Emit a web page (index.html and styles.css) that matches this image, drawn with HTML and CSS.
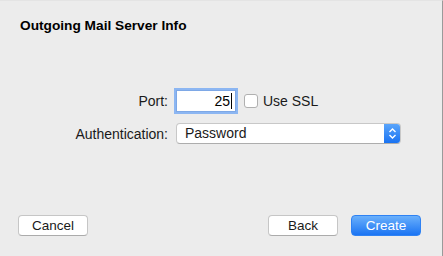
FILE: index.html
```html
<!DOCTYPE html>
<html>
	<head>
		<meta charset="utf-8">
		<meta name="viewport" content="width=device-width,initial-scale=1.0" />
		<title>Outgoing Mail Server Info</title>
		<link rel="stylesheet" href="styles.css">
	</head>
	<body>
		<div class="sheet">
			<h1 class="title">Outgoing Mail Server Info</h1>
			<div class="form">
				<label class="label">Port:</label>
				<div class="row">
					<div class="field focus">25<span class="caret"></span></div>
					<span class="check"></span>
					<span class="checkText">Use SSL</span>
				</div>
				<label class="label">Authentication:</label>
				<div class="row">
					<div class="popup">
						<span class="popupText">Password</span>
						<span class="arrows">
							<svg width="9" height="13" viewBox="0 0 9 13">
								<path d="M1.5 5 L4.5 2 L7.5 5 M1.5 8 L4.5 11 L7.5 8" fill="none" stroke="#fff" stroke-width="1.4" />
							</svg>
						</span>
					</div>
				</div>
			</div>
			<div class="footer">
				<button type="button" class="btn">Cancel</button>
				<div class="spacer"></div>
				<button type="button" class="btn">Back</button>
				<button type="button" class="btn primary">Create</button>
			</div>
		</div>
	</body>
</html>
```

FILE: styles.css
```css
*{
	padding: 0;
	margin: 0;
	box-sizing: border-box;
}
body{
	background: #ececec;
	font-family: "Liberation Sans", Arial, sans-serif;
	font-size: 14px;
	color: #1a1a1a;
}
.sheet{
	width: 443px;
	height: 256px;
	display: flex;
	flex-direction: column;
	border-top: 1px solid #e4e4e4;
	border-right: 1px solid #9a9a9a;
}
.title{
	font-size: 13.7px;
	font-weight: bold;
	color: #000;
	padding: 17px 0 0 20px;
	line-height: 16px;
}
.form{
	display: grid;
	grid-template-columns: 168px 1fr;
	column-gap: 8px;
	row-gap: 11px;
	align-items: center;
	margin-top: 56px;
}
.label{
	text-align: right;
	font-size: 14px;
}
.row{
	display: flex;
	align-items: center;
}
.field{
	width: 60px;
	height: 22px;
	background: #fff;
	border: 1px solid #b5b5b5;
	text-align: right;
	padding-right: 3px;
	line-height: 20px;
	font-size: 14px;
	color: #000;
}
.field.focus{
	border-color: #7ea8e6;
	box-shadow: 0 0 0 2px #8cb6f2;
}
.caret{
	display: inline-block;
	width: 1px;
	height: 16px;
	background: #000;
	vertical-align: -3px;
	margin-left: 1px;
}
.check{
	width: 14px;
	height: 14px;
	margin-left: 8px;
	background: #fff;
	border: 1px solid #b0b0b0;
	border-radius: 3px;
}
.checkText{
	margin-left: 5px;
}
.popup{
	width: 225px;
	height: 21px;
	display: flex;
	background: #fff;
	border: 1px solid #c8c8c8;
	border-bottom-color: #adadad;
	border-radius: 4px;
	overflow: hidden;
}
.popupText{
	flex: 1;
	padding-left: 8px;
	line-height: 19px;
}
.arrows{
	width: 16px;
	display: flex;
	align-items: center;
	justify-content: center;
	background: linear-gradient(#5aa5fb, #1a73f2);
}
.footer{
	display: flex;
	margin-top: auto;
	padding: 0 21px 20px 18px;
	gap: 13px;
}
.spacer{
	flex: 1;
}
.btn{
	width: 70px;
	height: 21px;
	font-family: "Liberation Sans", Arial, sans-serif;
	font-size: 13.5px;
	color: #1a1a1a;
	background: #fff;
	border: 1px solid #c6c6c6;
	border-bottom-color: #ababab;
	border-radius: 4px;
}
.btn.primary{
	color: #fff;
	border-color: #2f82f3;
	background: linear-gradient(#6ab0fb, #1b74f3);
}
```
